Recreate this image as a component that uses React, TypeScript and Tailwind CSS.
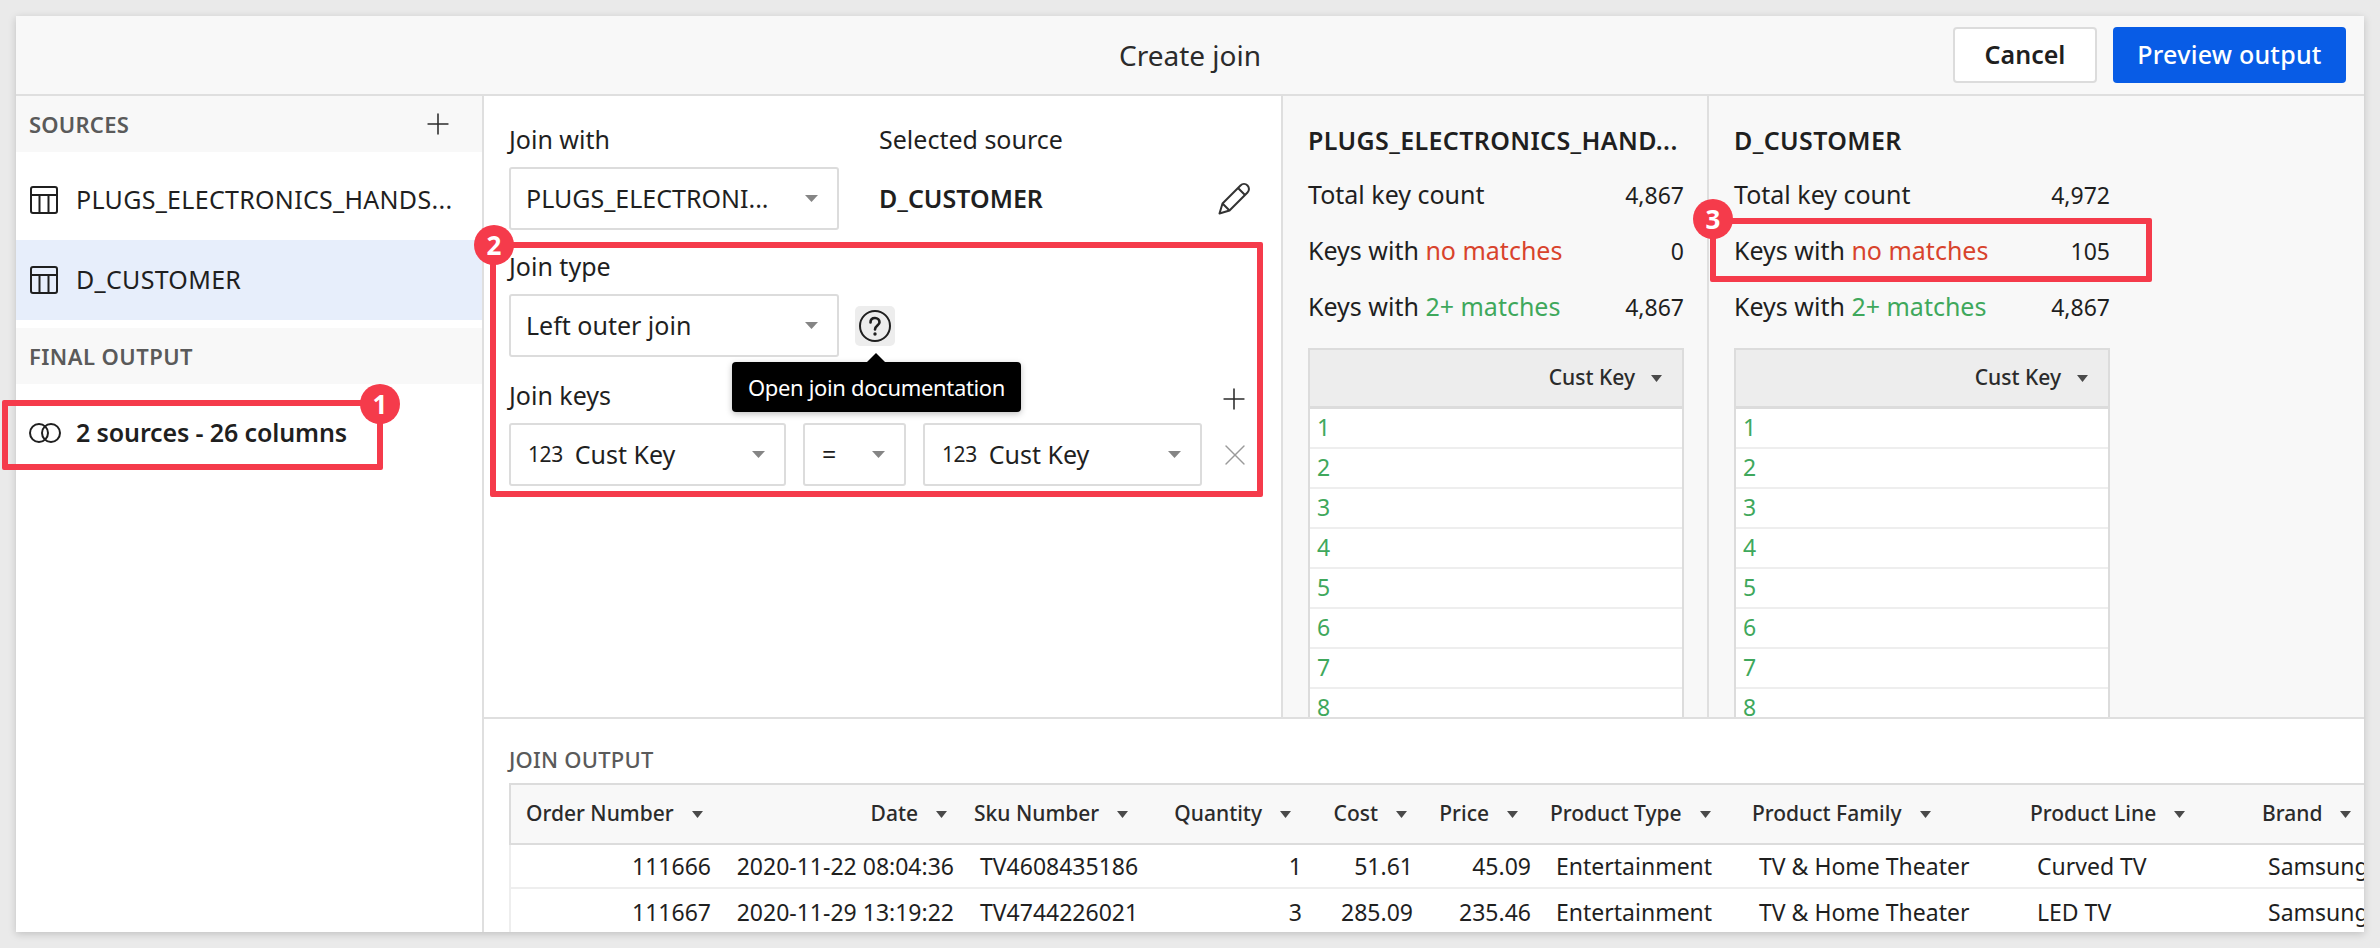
import { Plus, X } from "lucide-react";

const font = { fontFamily: '"Noto Sans", sans-serif' };

const columns = [
  { name: "Order Number", width: "w-[213px]", head: "justify-start pl-[15px]", cell: "text-right pr-[13px]" },
  { name: "Date", width: "w-[243px]", head: "justify-end pr-[20px]", cell: "text-right pr-[13px]" },
  { name: "Sku Number", width: "w-[198px]", head: "justify-start pl-[7px]", cell: "text-left pl-[13px]" },
  { name: "Quantity", width: "w-[157px]", head: "justify-end pr-[31px]", cell: "text-right pr-[20px]" },
  { name: "Cost", width: "w-[110px]", head: "justify-end pr-[25px]", cell: "text-right pr-[19px]" },
  { name: "Price", width: "w-[110px]", head: "justify-end pr-[24px]", cell: "text-right pr-[11px]" },
  { name: "Product Type", width: "w-[202px]", head: "justify-start pl-[8px]", cell: "text-left pl-[14px]" },
  { name: "Product Family", width: "w-[278px]", head: "justify-start pl-[8px]", cell: "text-left pl-[15px]" },
  { name: "Product Line", width: "w-[232px]", head: "justify-start pl-[8px]", cell: "text-left pl-[15px]" },
  { name: "Brand", width: "w-[112px]", head: "justify-start pl-[8px]", cell: "text-left pl-[14px]" },
];

const rows = [
  ["111666", "2020-11-22 08:04:36", "TV4608435186", "1", "51.61", "45.09", "Entertainment", "TV & Home Theater", "Curved TV", "Samsung"],
  ["111667", "2020-11-29 13:19:22", "TV4744226021", "3", "285.09", "235.46", "Entertainment", "TV & Home Theater", "LED TV", "Samsung"],
];

function Caret() {
  return (
    <svg width="13" height="7" viewBox="0 0 13 7" className="shrink-0 text-[#858585]">
      <path d="M0 0h13L6.500 7z" fill="currentColor" />
    </svg>
  );
}

function SmallCaret() {
  return (
    <svg width="11" height="7" viewBox="0 0 11 7" className="shrink-0 text-[#4a4a4a]">
      <path d="M0 0h11L5.5 7z" fill="currentColor" />
    </svg>
  );
}

function TableIcon() {
  return (
    <svg width="28" height="28" viewBox="0 0 28 28" fill="none" stroke="#1f1f1f" strokeWidth="2" className="shrink-0">
      <rect x="1" y="1" width="26" height="26" rx="2" />
      <path d="M1 9h26M9.500 9v18M18.500 9v18" />
    </svg>
  );
}

function Select({ className, children }: { className: string; children: React.ReactNode }) {
  return (
    <div className={`flex h-[63px] shrink-0 items-center justify-between rounded-[3px] border-2 border-[#dcdcdc] bg-white ${className}`}>
      {children}
    </div>
  );
}

function Badge({ n, className }: { n: number; className: string }) {
  return (
    <div className={`absolute flex h-10 w-10 items-center justify-center rounded-full bg-[#f53b4b] text-[26px] font-bold text-white ${className}`}>
      {n}
    </div>
  );
}

function RedBox({ className }: { className: string }) {
  return <div className={`pointer-events-none absolute rounded-[2px] border-[6px] border-[#f53b4b] ${className}`} />;
}

function Stat({ children, value }: { children: React.ReactNode; value: string }) {
  return (
    <div className="flex h-[56px] items-center justify-between text-[25px] text-[#1f1f1f]">
      <span>{children}</span>
      <span className="text-[23px]">{value}</span>
    </div>
  );
}

function KeyCell({ n }: { n: number }) {
  return <div className="flex h-[40px] items-center border-b-2 border-[#eeeeee] pb-[2px] pl-[7px] text-[23px] text-[#3fa85c]">{n}</div>;
}

function KeyPanel({ title, stats, className }: { title: string; stats: string[]; className: string }) {
  return (
    <div className={`h-full overflow-hidden bg-[#f8f8f8] pl-[25px] pt-[30px] ${className}`}>
      <div className="w-[376px]">
        <div className="h-[28px] whitespace-nowrap text-[25px] leading-[28px] font-semibold tracking-[0.015em] text-[#1f1f1f]">{title}</div>
        <div className="mt-[13px]">
          <Stat value={stats[0]}>Total key count</Stat>
          <Stat value={stats[1]}>
            Keys with <span className="text-[#d8432c]">no matches</span>
          </Stat>
          <Stat value={stats[2]}>
            Keys with <span className="text-[#3fa85c]">2+ matches</span>
          </Stat>
        </div>
        <div className="mt-[13px] border-x-2 border-t-2 border-[#dcdcdc] bg-white">
          <div className="flex h-[59px] items-center justify-end gap-[16px] border-b-[3px] border-[#dcdcdc] bg-[#ededed] pr-[20px] text-[21px] font-medium text-[#2b2b2b]">
            <span>Cust Key</span>
            <SmallCaret />
          </div>
          {[1, 2, 3, 4, 5, 6, 7, 8].map((n) => (
            <KeyCell key={n} n={n} />
          ))}
        </div>
      </div>
    </div>
  );
}

function KeyField({ className }: { className: string }) {
  return (
    <Select className={`pl-[17px] pr-[19px] ${className}`}>
      <span className="flex items-center gap-[12px]">
        <span className="text-[21px] tracking-[-0.02em]">123</span>
        <span>Cust Key</span>
      </span>
      <Caret />
    </Select>
  );
}

export default function App() {
  return (
    <div style={font} className="relative h-[948px] w-[2380px] overflow-hidden bg-[#eaeaea] p-4">
      <div className="flex h-[916px] w-[2348px] flex-col bg-white shadow-[0_2px_8px_rgba(0,0,0,0.18)]">
        <header className="relative flex h-[80px] shrink-0 items-center justify-end gap-4 border-b-2 border-[#dfdfdf] bg-[#f8f8f8] pr-[18px]">
          <div className="absolute inset-x-0 text-center text-[28px] text-[#2b2b2b]">Create join</div>
          <button className="relative h-[56px] w-[144px] rounded-[4px] border-2 border-[#dcdcdc] bg-white text-[25px] font-semibold text-[#1f1f1f]">Cancel</button>
          <button className="relative h-[56px] w-[233px] rounded-[4px] bg-[#085ce6] text-[25px] font-medium tracking-[0.01em] text-white">Preview output</button>
        </header>

        <div className="flex min-h-0 flex-1">
          <aside className="w-[468px] shrink-0 border-r-2 border-[#dfdfdf] bg-white">
            <div className="flex h-[56px] items-center justify-between bg-[#f8f8f8] pl-[13px] pr-[27px] text-[22px] font-semibold tracking-[0.01em] text-[#5a5a5a]">
              <span>SOURCES</span>
              <Plus size={34} strokeWidth={1.1} className="text-[#2b2b2b]" />
            </div>
            <div className="flex h-[88px] items-center gap-[18px] pl-[14px] pt-[8px] text-[25px] tracking-[0.012em] text-[#1f1f1f]">
              <TableIcon />
              <span>PLUGS_ELECTRONICS_HANDS...</span>
            </div>
            <div className="flex h-[80px] items-center gap-[18px] bg-[#e7eefb] pl-[14px] text-[25px] tracking-[0.012em] text-[#1f1f1f]">
              <TableIcon />
              <span>D_CUSTOMER</span>
            </div>
            <div className="mt-[8px] flex h-[56px] items-center bg-[#f8f8f8] pl-[13px] text-[22px] font-semibold tracking-[0.02em] text-[#5a5a5a]">FINAL OUTPUT</div>
            <div className="flex h-[96px] items-center gap-[14px] pl-[12px] pt-[2px] text-[25px] font-semibold tracking-[-0.005em] text-[#1f1f1f]">
              <svg width="34" height="20" viewBox="0 0 34 20" fill="none" stroke="#1f1f1f" strokeWidth="2" className="shrink-0">
                <circle cx="11" cy="10" r="9" />
                <circle cx="23" cy="10" r="9" />
              </svg>
              <span>2 sources - 26 columns</span>
            </div>
          </aside>

          <div className="flex min-w-0 flex-1 flex-col">
            <div className="flex h-[623px] shrink-0 border-b-2 border-[#dfdfdf]">
              <section className="w-[799px] shrink-0 border-r-2 border-[#dfdfdf] bg-white pl-[25px] pt-[29px] text-[25px] text-[#1f1f1f]">
                <div className="flex h-[30px] items-center">
                  <span className="w-[370px]">Join with</span>
                  <span>Selected source</span>
                </div>
                <div className="mt-[12px] flex items-center">
                  <Select className="w-[330px] pl-[15px] pr-[19px]">
                    <span>PLUGS_ELECTRONI...</span>
                    <Caret />
                  </Select>
                  <span className="ml-[40px] w-[339px] font-semibold">D_CUSTOMER</span>
                  <svg width="32" height="32" viewBox="0 0 32 32" fill="none" stroke="#333333" strokeWidth="2" strokeLinejoin="round" className="shrink-0">
                    <path d="M1.500 30.500L4.500 20.500L22.500 2.500A4.900 4.900 0 0 1 29.500 9.500L11.500 27.500Z" />
                    <path d="M4.500 20.500L11.500 27.500M20 5L27 12" />
                  </svg>
                </div>
                <div className="mt-[22px] flex h-[30px] items-center">Join type</div>
                <div className="mt-[12px] flex items-center gap-4">
                  <Select className="w-[330px] pl-[15px] pr-[19px]">
                    <span>Left outer join</span>
                    <Caret />
                  </Select>
                  <div className="flex h-[40px] w-[40px] items-center justify-center rounded-[5px] bg-[#ededed]">
                    <svg width="32" height="32" viewBox="0 0 32 32" fill="none" stroke="#1f1f1f" strokeWidth="2">
                      <circle cx="16" cy="16" r="15" />
                      <path d="M11.500 12.500c0-3 2-4.500 4.500-4.500s4.500 1.700 4.500 4.200c0 3.300-4.500 3.500-4.500 7.300" strokeWidth="2.600" strokeLinecap="round" />
                      <circle cx="16" cy="24" r="1.700" fill="#1f1f1f" stroke="none" />
                    </svg>
                  </div>
                </div>
                <div className="mt-[24px] flex h-[30px] items-center justify-between pr-[30px]">
                  <span>Join keys</span>
                  <Plus size={34} strokeWidth={1.1} className="mt-[5px] text-[#2b2b2b]" />
                </div>
                <div className="mt-[12px] flex items-center gap-[17px]">
                  <KeyField className="w-[277px]" />
                  <Select className="w-[103px] pl-[17px] pr-[19px]">
                    <span>=</span>
                    <Caret />
                  </Select>
                  <KeyField className="w-[279px]" />
                  <X size={36} strokeWidth={0.9} className="-ml-[2px] text-[#9a9a9a]" />
                </div>
              </section>
              <KeyPanel title="PLUGS_ELECTRONICS_HAND..." stats={["4,867", "0", "4,867"]} className="w-[426px] shrink-0 border-r-2 border-[#dfdfdf]" />
              <KeyPanel title="D_CUSTOMER" stats={["4,972", "105", "4,867"]} className="min-w-0 flex-1" />
            </div>

            <section className="min-h-0 flex-1 overflow-hidden bg-white pl-[25px]">
              <div className="flex h-[64px] items-center pt-[16px] text-[22px] font-medium tracking-[0.01em] text-[#5a5a5a]">JOIN OUTPUT</div>
              <div className="flex h-[62px] items-center border-y-2 border-l-2 border-[#dcdcdc] bg-[#f8f8f8] text-[21px] font-medium text-[#2b2b2b]">
                {columns.map((c) => (
                  <div key={c.name} className={`flex shrink-0 items-center gap-[18px] ${c.width} ${c.head}`}>
                    <span>{c.name}</span>
                    <SmallCaret />
                  </div>
                ))}
              </div>
              {rows.map((r) => (
                <div key={r[0]} className="flex h-[44px] items-center overflow-hidden border-b-2 border-l-2 border-[#eeeeee] text-[23px] text-[#1f1f1f] last:h-[47px] last:border-b-0">
                  {r.map((v, i) => (
                    <div key={i} className={`shrink-0 whitespace-nowrap ${columns[i].width} ${columns[i].cell}`}>
                      {v}
                    </div>
                  ))}
                </div>
              ))}
            </section>
          </div>
        </div>
      </div>

      <RedBox className="left-[2px] top-[400px] h-[70px] w-[381px]" />
      <RedBox className="left-[490px] top-[242px] h-[255px] w-[773px]" />
      <RedBox className="left-[1710px] top-[218px] h-[64px] w-[442px]" />
      <Badge n={1} className="left-[360px] top-[384px]" />
      <Badge n={2} className="left-[474px] top-[225px]" />
      <Badge n={3} className="left-[1693px] top-[199px]" />

      <div className="absolute left-[732px] top-[362px] flex h-[50px] w-[289px] items-center justify-center rounded-[4px] bg-black text-[22px] tracking-[-0.015em] text-white shadow-[0_2px_6px_rgba(0,0,0,0.25)]">
        Open join documentation
        <div className="absolute -top-[9px] left-[135px] h-0 w-0 border-x-[9px] border-b-[9px] border-x-transparent border-b-black" />
      </div>
    </div>
  );
}
